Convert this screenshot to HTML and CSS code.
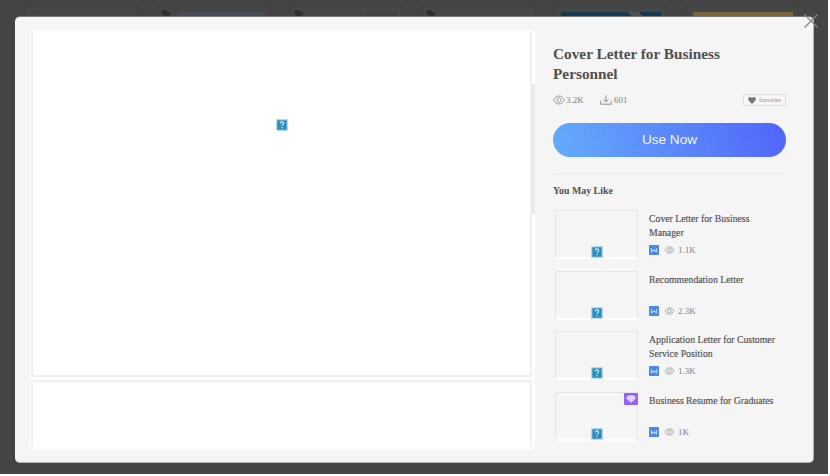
FILE: index.html
```html
<!DOCTYPE html>
<html lang="en">
<head>
<meta charset="utf-8">
<title>Cover Letter for Business Personnel</title>
<link rel="stylesheet" href="styles.css">
</head>
<body>
<svg class="defs" width="0" height="0">
  <defs>
    <symbol id="eye" viewBox="0 0 12 10"><g fill="none" stroke="currentColor" stroke-width=".75"><path d="M.6 5C1.600 2.200 3.800 1 6 1s4.400 1.200 5.400 4C10.400 7.800 8.200 9 6 9S1.600 7.800.6 5z"/><circle cx="6" cy="5" r="2.200"/></g></symbol>
    <symbol id="word" viewBox="0 0 10 10"><rect width="10" height="10" rx=".8" fill="#4a8ae6"/><path d="M2.300 3v4L5 5.300 7.700 7V3M3.500 5.200h3" fill="none" stroke="#d9e8fd" stroke-width=".9"/></symbol>
    <symbol id="missing" viewBox="0 0 12 12"><rect width="12" height="12" fill="#b9d9ea"/><rect x="1.300" y="1.300" width="9.400" height="9.400" fill="#2b8dbd"/><path d="M4.300 4.400c0-2 3.400-2 3.400 0 0 1.200-1.700 1.300-1.700 2.600M6 8v1.200" fill="none" stroke="#d8f1fa" stroke-width="1.100"/></symbol>
  </defs>
</svg>
<div class="screen">
  <div class="gallery">
    <div class="card"><div class="thumb dotted"></div></div>
    <div class="card"><svg class="pin" viewBox="0 0 10 6"><path d="M1 1l3-1 2 2 3 1-2 3H3L0 3z"/></svg><div class="thumb slate"></div></div>
    <div class="card"><svg class="pin" viewBox="0 0 10 6"><path d="M1 1l3-1 2 2 3 1-2 3H3L0 3z"/></svg><div class="thumb faint"></div></div>
    <div class="card"><svg class="pin" viewBox="0 0 10 6"><path d="M1 1l3-1 2 2 3 1-2 3H3L0 3z"/></svg></div>
    <div class="card"><div class="thumb blue"></div></div>
    <div class="card"><div class="thumb sand"></div></div>
  </div>
  <main class="modal">
    <section class="preview">
      <div class="page first"><svg class="missing"><use href="#missing"/></svg></div>
      <div class="page second"></div>
      <div class="scrollbar"></div>
    </section>
    <aside class="details">
      <h1>Cover Letter for Business Personnel</h1>
      <div class="stats">
        <svg class="eye"><use href="#eye"/></svg><span class="views">3.2K</span>
        <svg class="download" viewBox="0 0 12 10"><path d="M6 .3v6.500M3.300 4.300 6 7l2.700-2.700M.8 5.800v3.400h10.400V5.800" fill="none" stroke="currentColor" stroke-width=".85"/></svg><span>601</span>
        <button class="favorite"><svg viewBox="0 0 8 7"><path d="M4 7 .6 3.500C-.6 1.500 1-.2 2.400.1 3.300.2 4 1 4 1.200 4 1 4.700.2 5.600.1 7-.2 8.600 1.500 7.400 3.500z"/></svg>favorite</button>
      </div>
      <button class="use">Use Now</button>
      <h2>You May Like</h2>
      <div class="list">
        <article class="item"><div class="picture"><svg class="missing"><use href="#missing"/></svg></div>
          <div class="info"><h3>Cover Letter for Business Manager</h3><div class="meta"><svg class="word"><use href="#word"/></svg><svg class="eye"><use href="#eye"/></svg><span>1.1K</span></div></div></article>
        <article class="item"><div class="picture"><svg class="missing"><use href="#missing"/></svg></div>
          <div class="info"><h3>Recommendation Letter</h3><div class="meta"><svg class="word"><use href="#word"/></svg><svg class="eye"><use href="#eye"/></svg><span>2.3K</span></div></div></article>
        <article class="item"><div class="picture"><svg class="missing"><use href="#missing"/></svg></div>
          <div class="info"><h3>Application Letter for Customer Service Position</h3><div class="meta"><svg class="word"><use href="#word"/></svg><svg class="eye"><use href="#eye"/></svg><span>1.3K</span></div></div></article>
        <article class="item"><div class="picture"><svg class="gem" viewBox="0 0 14 12"><rect width="14" height="12" rx="1" fill="#9163f6"/><path d="M4.300 2.500h5.400L12 5l-5 5-5-5z" fill="#eee4ff"/><path d="M2.500 5h9M5 5l2 4 2-4" fill="none" stroke="#c4a9fa" stroke-width=".6"/></svg><svg class="missing"><use href="#missing"/></svg></div>
          <div class="info"><h3>Business Resume for Graduates</h3><div class="meta"><svg class="word"><use href="#word"/></svg><svg class="eye"><use href="#eye"/></svg><span>1K</span></div></div></article>
      </div>
    </aside>
  </main>
  <svg class="close" viewBox="0 0 14 14"><path d="M.5.5l13 13M13.500.5l-13 13" stroke="#858585" stroke-width="1.300"/></svg>
</div>
</body>
</html>
```
FILE: styles.css
```css
* { box-sizing: border-box; }
body { margin: 0; background: #fff; font-family: "Liberation Serif", serif; color: #505050; }
svg { display: block; flex: none; }
.defs { position: absolute; }
.screen { position: relative; width: 828px; height: 474px; background: #444; overflow: hidden; }
.gallery { display: grid; grid-template-columns: repeat(6, 113px); column-gap: 19.300px; padding: 6px 0 0 25px; }
.card { position: relative; height: 100px; padding: 5px 5px 0 6px; border: 1px solid #404040; background: #464646; }
.thumb { height: 80px; }
.dotted { height: 4px; margin-right: 6px; border-top: 1px dotted #393939; }
.slate { margin-left: 14px; border-radius: 4px 0 0 0; background: #494d57; }
.faint { margin-left: 70px; background: #414141; }
.blue { background: linear-gradient(42deg, #173a50 0 82%, #4c5358 82% 88%, #173a50 88%); }
.sand { background: #7c6237; }
.pin { position: absolute; left: 3px; top: 2px; width: 11px; height: 8px; fill: #2c2f34; }
.modal { position: absolute; left: 15px; top: 16px; width: 799px; height: 447px; padding: 15px; display: flex; background: #f5f5f5; border: solid #b5b5b5; border-width: 1px 1px 1px 0; border-top-color: #777; border-radius: 5px; }
.preview { position: relative; width: 505px; height: 418px; margin-top: -1px; padding: 1px 3px 0 1px; background: #fff; }
.page { border: 2px solid #f0f0f0; }
.first { height: 345px; border-top: 0; padding-top: 87px; }
.first .missing { margin: 0 auto; }
.second { height: 67px; margin-top: 3px; border-bottom: 0; }
.missing { width: 12px; height: 12px; }
.scrollbar { position: absolute; right: 0; top: 53px; width: 4px; height: 130px; background: #ebebeb; }
.details { width: 234px; margin-left: 18px; padding-top: 12px; }
h1 { width: 210px; margin: 0; font-size: 15.300px; line-height: 19.500px; }
.stats { display: flex; align-items: center; width: 233px; height: 12px; margin-top: 11px; font-size: 9px; color: #808080; }
.stats .eye { width: 12px; height: 10px; margin-right: 1px; }
.views { width: 34px; }
.download { width: 12px; height: 10px; margin-right: 2px; }
.favorite { display: flex; align-items: center; justify-content: center; width: 43px; height: 12px; margin-left: auto; padding: 0; border: 1px solid #dedede; border-radius: 1px; background: #f7f7f7; color: #909090; font: 7px "Liberation Serif", serif; }
.favorite svg { width: 8px; height: 7px; margin-right: 3px; fill: #777; }
.use { display: block; width: 233px; height: 34px; margin: 17px 0 16px; padding: 0; border: 0; border-radius: 17px; background: linear-gradient(70deg, #64acfb, #5265fa); color: #f4f7ff; font: 13.600px/34px "Liberation Sans", sans-serif; }
h2 { width: 233px; margin: 0; padding-top: 10px; border-top: 1px solid #ededed; font-size: 9.900px; line-height: 13px; }
.list { display: grid; row-gap: 11.600px; margin: 13px 0 0 2px; }
.item { display: flex; height: 49px; }
.picture { position: relative; display: flex; align-items: flex-end; justify-content: center; width: 83px; height: 49px; border: 1px solid #e7e7e7; border-bottom: 2px solid #fff; }
.picture .missing { margin-bottom: -1px; }
.gem { position: absolute; right: -1px; top: 0; width: 14px; height: 12px; }
.info { width: 140px; margin-left: 11px; }
h3 { width: 132px; height: 28px; margin: 2px 0 5px; font-size: 9.750px; font-weight: 400; line-height: 14px; -webkit-text-stroke: .15px #505050; }
.meta { display: flex; align-items: center; height: 10px; font-size: 9px; color: #808080; }
.word { width: 10px; height: 10px; margin-right: 5px; }
.meta .eye { width: 11px; height: 8px; margin-right: 3px; }
.close { position: absolute; left: 804px; top: 14px; width: 14px; height: 14px; }
```
